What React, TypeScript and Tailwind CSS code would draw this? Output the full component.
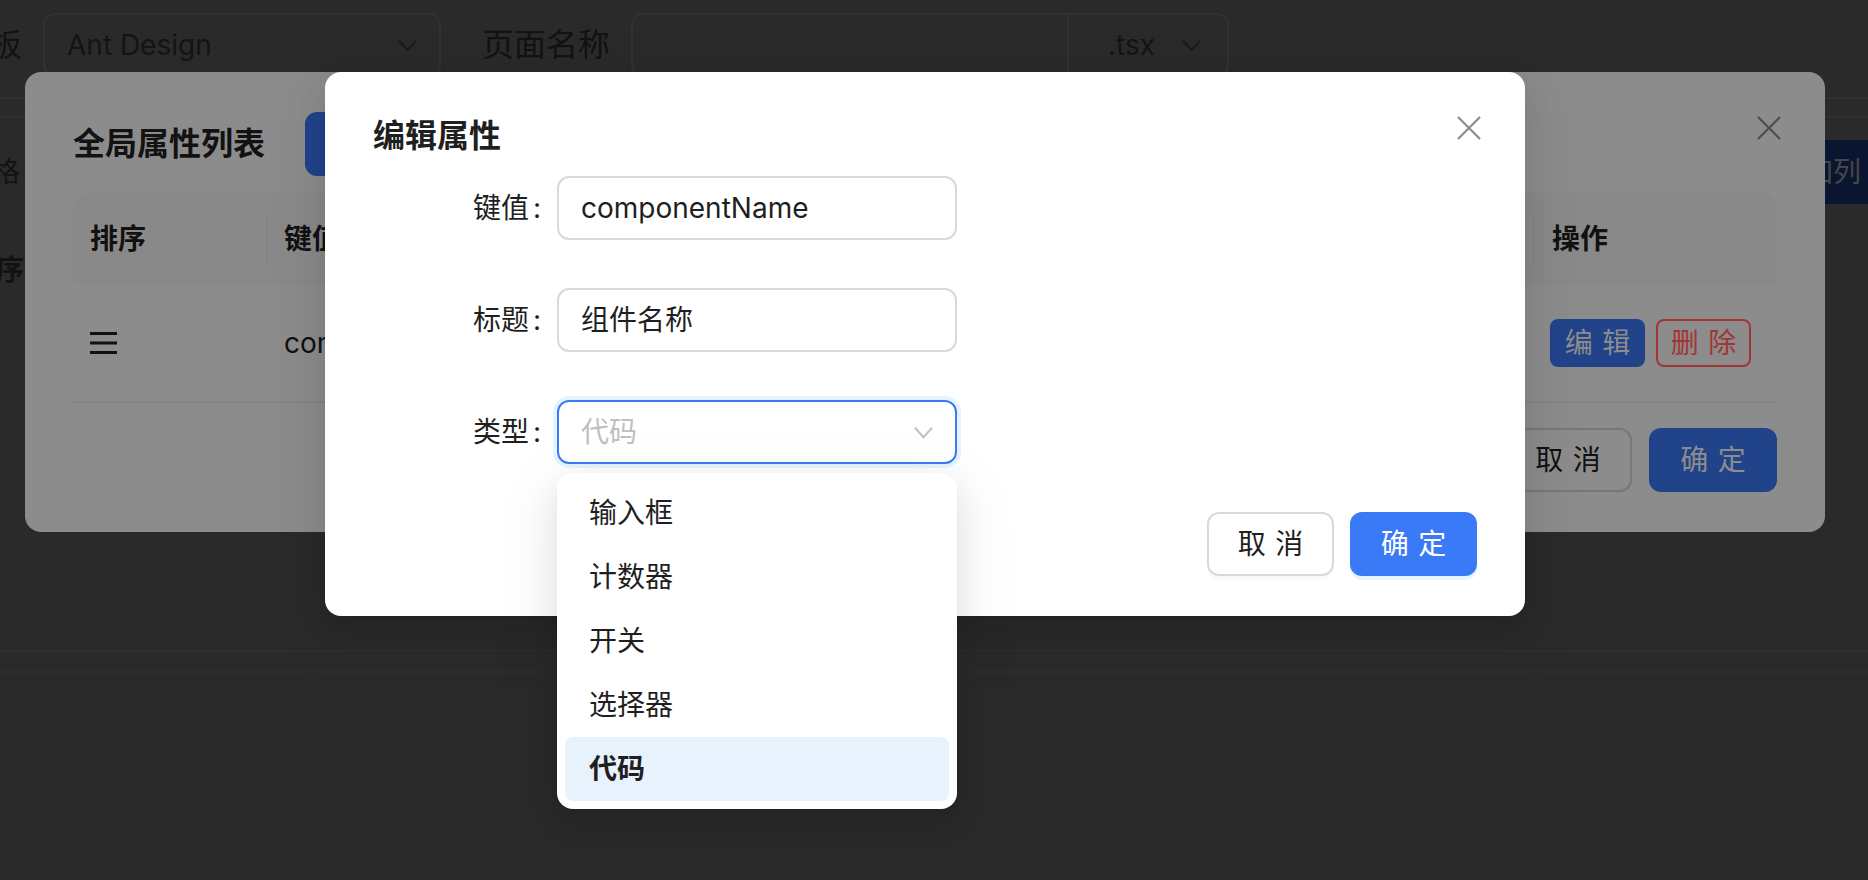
import React from 'react';

const Chevron = ({ className }: { className?: string }) => (
  <svg viewBox="0 0 20 13" className={className} fill="none" stroke="currentColor" strokeWidth="2">
    <path d="M1 1.5 L10 11.5 L19 1.5" />
  </svg>
);

const CloseIcon = ({ className }: { className?: string }) => (
  <svg viewBox="0 0 24 24" className={className} fill="none" stroke="currentColor" strokeWidth="2.2">
    <path d="M1 1 L23 23 M23 1 L1 23" />
  </svg>
);

const MenuIcon = ({ className }: { className?: string }) => (
  <svg viewBox="0 0 27 22" className={className} fill="none" stroke="currentColor" strokeWidth="2.8">
    <path d="M0 1.5 H27 M0 11 H27 M0 20.5 H27" />
  </svg>
);

const options = ['输入框', '计数器', '开关', '选择器', '代码'];

// two-char chinese button text gets extra spacing like antd
const Spaced = ({ text }: { text: string }) => (
  <span className="tracking-[0.34em] -mr-[0.34em]">{text}</span>
);

export default function App() {
  return (
    <div className="relative w-[1868px] h-[880px] overflow-hidden bg-[#2a2a2a] font-['Inter','Noto_Sans_CJK_SC',sans-serif]">
      {/* page behind the masks */}
      <div className="flex flex-col">
        <div className="flex items-center pt-[13px] -ml-[42px]">
          <span className="text-[32px] leading-[40px] text-[#121212] mr-[21px]">模板</span>
          <div className="w-[398px] h-[64px] rounded-[12px] border-2 border-[#323232] px-[22px] flex items-center justify-between">
            <span className="text-[28px] text-[#141414]">Ant Design</span>
            <Chevron className="w-[19px] h-[13px] text-[#1c1c1c]" />
          </div>
          <span className="text-[32px] leading-[40px] text-[#121212] ml-[41px] mr-[21px]">页面名称</span>
          <div className="w-[598px] h-[64px] rounded-[12px] border-2 border-[#323232] flex">
            <div className="flex-1" />
            <div className="w-[160px] border-l-2 border-[#323232] pl-[39px] pr-[26px] flex items-center justify-between">
              <span className="text-[28px] text-[#141414]">.tsx</span>
              <Chevron className="w-[19px] h-[13px] text-[#1c1c1c]" />
            </div>
          </div>
        </div>

        <div className="mt-[20px] h-[21px] border-y-2 border-[#2f2f2f]" />

        <div className="mt-[22px] h-[64px] flex items-center justify-between">
          <span className="-ml-[36px] text-[28px] text-[#121212]">
            表格<span className="ml-[4px]">:</span>
          </span>
          <div className="-mr-[23px] h-[64px] px-[30px] rounded-[12px] bg-[#0a1531] text-[#474747] text-[28px] flex items-center">
            添加列
          </div>
        </div>

        <div className="mt-[46px] h-[40px] leading-[40px] -ml-[32px] text-[28px] font-semibold text-[#121212]">排序</div>

        <div className="mt-[360px] h-[23px] border-y-2 border-[#2e2e2e]" />
      </div>

      {/* first modal, under the mask */}
      <div className="absolute left-[25px] top-[72px] w-[1800px] h-[460px] rounded-[16px] bg-[#8c8c8c] px-[48px] pt-[40px]">
        <div className="absolute top-[34px] right-[34px] w-[44px] h-[44px] flex items-center justify-center">
          <CloseIcon className="w-[24px] h-[24px] text-[#4d4d4d]" />
        </div>
        <div className="flex items-center h-[64px]">
          <span className="text-[32px] leading-[48px] font-semibold text-[#121212]">全局属性列表</span>
          <div className="ml-[40px] h-[64px] w-[200px] rounded-[12px] bg-[#21438a]" />
        </div>

        <div className="mt-[17px]">
          <div className="h-[92px] rounded-t-[16px] bg-[#898989] flex items-center text-[28px] font-semibold text-[#111111]">
            <div className="w-[193px] pl-[17px]">排序</div>
            <div className="w-[2px] h-[46px] bg-[#838383]" />
            <div className="flex-1 pl-[16px]">键值</div>
            <div className="w-[2px] h-[46px] bg-[#838383]" />
            <div className="w-[242px] pl-[17px]">操作</div>
          </div>
          <div className="h-[118px] border-b-2 border-[#848484] flex items-center text-[28px] text-[#111111]">
            <div className="w-[193px] pl-[17px] flex items-center">
              <MenuIcon className="w-[27px] h-[22px] text-[#111111]" />
            </div>
            <div className="w-[2px]" />
            <div className="flex-1 pl-[16px]">componentName</div>
            <div className="w-[2px]" />
            <div className="w-[242px] pl-[15px] flex items-center gap-[11px]">
              <div className="w-[95px] h-[48px] rounded-[8px] border-2 border-[#21438a] bg-[#21438a] text-[#8c8c8c] flex items-center justify-center">
                <Spaced text="编辑" />
              </div>
              <div className="w-[95px] h-[48px] rounded-[8px] border-2 border-[#a33535] text-[#a33535] flex items-center justify-center">
                <Spaced text="删除" />
              </div>
            </div>
          </div>
        </div>

        <div className="mt-[25px] flex justify-end gap-[17px] text-[28px]">
          <div className="w-[128px] h-[64px] rounded-[12px] border-2 border-[#777777] text-[#111111] flex items-center justify-center">
            <Spaced text="取消" />
          </div>
          <div className="w-[128px] h-[64px] rounded-[12px] bg-[#21438a] text-[#8c8c8c] flex items-center justify-center">
            <Spaced text="确定" />
          </div>
        </div>
      </div>

      {/* edit modal */}
      <div className="absolute left-[325px] top-[72px] w-[1200px] h-[544px] rounded-[16px] bg-white px-[48px] pt-[40px] shadow-[0_12px_32px_0_rgba(0,0,0,0.08),0_6px_12px_-8px_rgba(0,0,0,0.12),0_18px_56px_16px_rgba(0,0,0,0.05)]">
        <div className="absolute top-[34px] right-[34px] w-[44px] h-[44px] flex items-center justify-center">
          <CloseIcon className="w-[24px] h-[24px] text-[#8c8c8c]" />
        </div>
        <div className="text-[32px] leading-[48px] font-semibold text-[#1f1f1f]">编辑属性</div>

        <div className="mt-[16px] flex flex-col gap-[48px] text-[28px] text-[#1f1f1f]">
          <div className="flex items-center h-[64px]">
            <div className="w-[184px] pr-[16px] flex justify-end">
              键值<span className="ml-[4px]">:</span>
            </div>
            <div className="w-[400px] h-[64px] rounded-[12px] border-2 border-[#d9d9d9] px-[22px] flex items-center">
              componentName
            </div>
          </div>
          <div className="flex items-center h-[64px]">
            <div className="w-[184px] pr-[16px] flex justify-end">
              标题<span className="ml-[4px]">:</span>
            </div>
            <div className="w-[400px] h-[64px] rounded-[12px] border-2 border-[#d9d9d9] px-[22px] flex items-center">
              组件名称
            </div>
          </div>
          <div className="flex items-center h-[64px]">
            <div className="w-[184px] pr-[16px] flex justify-end">
              类型<span className="ml-[4px]">:</span>
            </div>
            <div className="relative w-[400px] h-[64px]">
              <div className="h-[64px] rounded-[12px] border-2 border-[#3b7af6] shadow-[0_0_0_4px_rgba(5,145,255,0.1)] px-[22px] flex items-center justify-between">
                <span className="text-[#bfbfbf]">代码</span>
                <Chevron className="w-[19px] h-[13px] text-[#bfbfbf]" />
              </div>
              <div className="absolute z-10 left-0 top-[73px] w-[400px] rounded-[16px] bg-white p-[8px] shadow-[0_12px_32px_0_rgba(0,0,0,0.08),0_6px_12px_-8px_rgba(0,0,0,0.12),0_18px_56px_16px_rgba(0,0,0,0.05)]">
                {options.map((o) => (
                  <div
                    key={o}
                    className={
                      o === '代码'
                        ? 'h-[64px] px-[24px] flex items-center rounded-[8px] bg-[#e8f2fd] font-semibold'
                        : 'h-[64px] px-[24px] flex items-center rounded-[8px]'
                    }
                  >
                    {o}
                  </div>
                ))}
              </div>
            </div>
          </div>
        </div>

        <div className="mt-[48px] flex justify-end gap-[16px] text-[28px]">
          <div className="w-[127px] h-[64px] rounded-[12px] border-2 border-[#d9d9d9] text-[#1f1f1f] flex items-center justify-center shadow-[0_4px_0_rgba(0,0,0,0.02)]">
            <Spaced text="取消" />
          </div>
          <div className="w-[127px] h-[64px] rounded-[12px] bg-[#3b7af6] text-white flex items-center justify-center shadow-[0_4px_0_rgba(5,145,255,0.1)]">
            <Spaced text="确定" />
          </div>
        </div>
      </div>
    </div>
  );
}
